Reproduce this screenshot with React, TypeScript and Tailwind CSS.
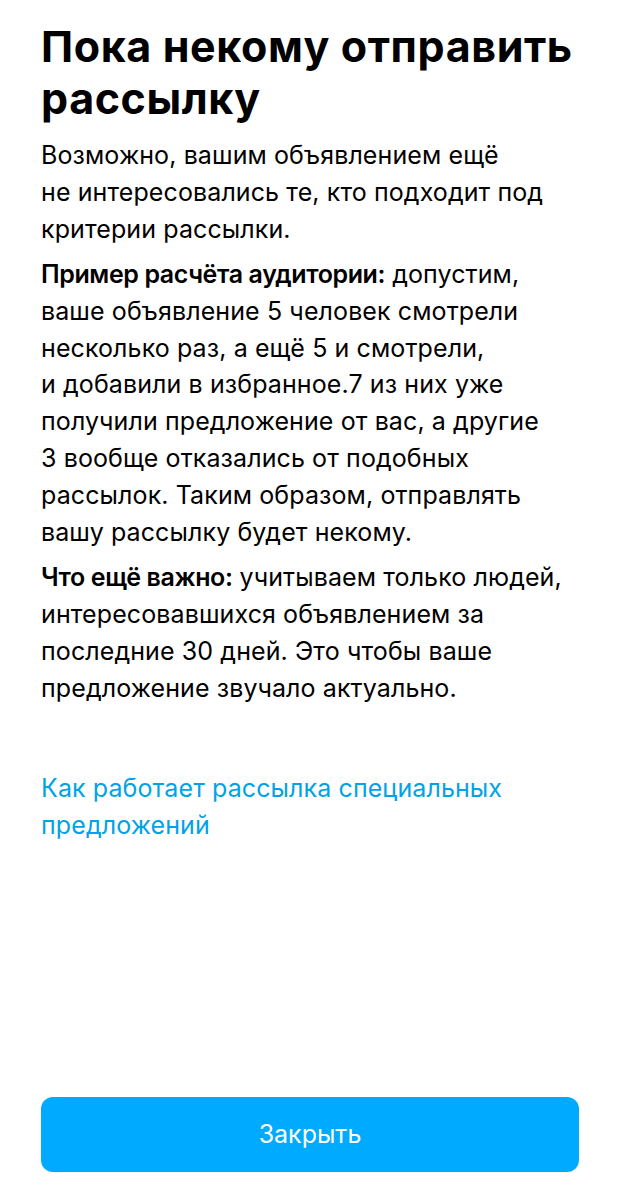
export default function App() {
  return (
    <div
      className="w-[620px] h-[1200px] bg-white flex flex-col px-[41px] pt-[20px] pb-[28px] text-black"
      style={{ fontFamily: 'Inter, "Noto Sans", sans-serif' }}
    >
      <h1 className="text-[43px] leading-[52px] font-bold tracking-[0.6px]">
        Пока некому отправить
        <br />
        рассылку
      </h1>

      <div className="mt-[13px] flex flex-col gap-[8px] text-[25px] leading-[36.9px] tracking-[0.1px]">
        <p>
          Возможно, вашим объявлением ещё
          <br />
          не интересовались те, кто подходит под
          <br />
          критерии рассылки.
        </p>
        <p>
          <span className="font-semibold tracking-[-0.4px]">Пример расчёта аудитории:</span> допустим,
          <br />
          ваше объявление 5 человек смотрели
          <br />
          несколько раз, а ещё 5 и смотрели,
          <br />
          и добавили в избранное.7 из них уже
          <br />
          получили предложение от вас, а другие
          <br />
          3 вообще отказались от подобных
          <br />
          рассылок. Таким образом, отправлять
          <br />
          вашу рассылку будет некому.
        </p>
        <p>
          <span className="font-semibold tracking-[-0.4px]">Что ещё важно:</span> учитываем только людей,
          <br />
          интересовавшихся объявлением за
          <br />
          последние 30 дней. Это чтобы ваше
          <br />
          предложение звучало актуально.
        </p>
      </div>

      <a className="mt-[63px] text-[25px] leading-[37px] tracking-[0.1px] text-[#00a3e6] cursor-pointer">
        Как работает рассылка специальных
        <br />
        предложений
      </a>

      <div className="flex-1" />

      <button className="w-full h-[75px] rounded-[12px] bg-[#00aaff] text-white text-[25px]">
        Закрыть
      </button>
    </div>
  );
}
